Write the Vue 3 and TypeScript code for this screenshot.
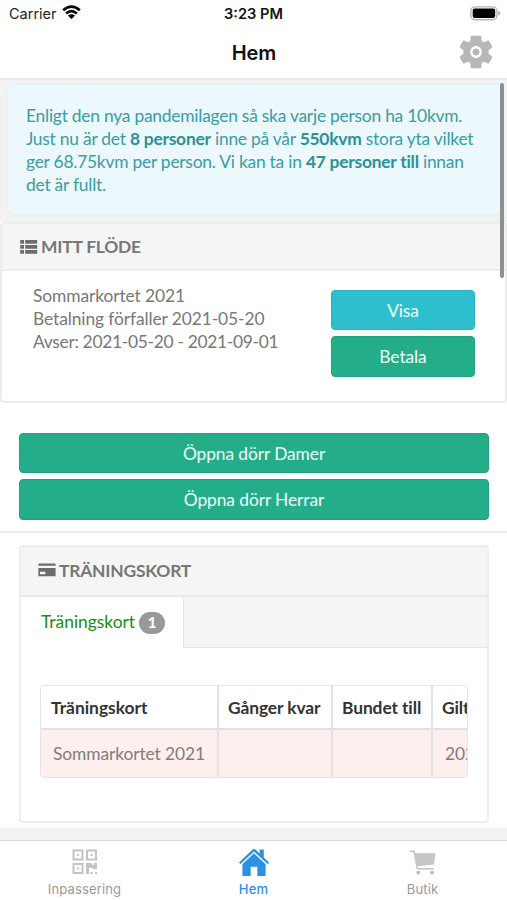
<script setup lang="ts">
interface Column {
  title: string
  value: string
}

const feedLines: string[] = [
  'Sommarkortet 2021',
  'Betalning förfaller 2021-05-20',
  'Avser: 2021-05-20 - 2021-09-01',
]
const doors: string[] = ['Öppna dörr Damer', 'Öppna dörr Herrar']
const columns: Column[] = [
  { title: 'Träningskort', value: 'Sommarkortet 2021' },
  { title: 'Gånger kvar', value: '' },
  { title: 'Bundet till', value: '' },
  { title: 'Giltigt till', value: '2021-09-01' },
]
</script>

<template>
  <div class="app">
    <header class="status">
      <div class="carrier">
        <span>Carrier</span>
        <svg class="wifi" width="19" height="15" viewBox="0 0 19 15">
          <path d="M1.2 5.2Q9.5-2 17.8 5.2M4.1 8.5Q9.5 3.900 14.900 8.500" fill="none" stroke="#050505" stroke-width="2.7" />
          <path d="M6 10.600Q9.500 7.700 13 10.600L9.500 14.200Z" fill="#050505" />
        </svg>
      </div>
      <div class="clock">3:23 PM</div>
      <div class="power">
        <svg width="31" height="15" viewBox="0 0 31 15">
          <rect x="0.9" y="0.9" width="26" height="12.800" rx="4" fill="#fff" stroke="#b4b4b4" stroke-width="1.400" />
          <rect x="2.700" y="2.500" width="22.500" height="9.600" rx="2" fill="#000" />
          <path d="M28.200 5Q30.300 5.500 30.300 7.300T28.200 9.700Z" fill="#aaa" />
        </svg>
      </div>
    </header>

    <nav class="navbar">
      <h1>Hem</h1>
      <svg class="gear" width="34" height="34" viewBox="0 0 34 34">
        <path fill="#b7b7b7" stroke="#b7b7b7" stroke-width="1.5" stroke-linejoin="round" d="M12.700 1.500h8.600l.9 5.100 2.500 1.500 4.700-1.800 3.200 5.600-3.800 3.300v3.600l3.800 3.300-3.200 5.600-4.700-1.800-2.500 1.500-.9 5.100h-8.600l-.9-5.100-2.500-1.500-4.700 1.800-3.200-5.600 3.800-3.300v-3.600l-3.800-3.300 3.200-5.600 4.700 1.800 2.500-1.500z" />
        <circle cx="17" cy="17" r="4.700" fill="#b7b7b7" stroke="#fff" stroke-width="2.400" />
      </svg>
    </nav>

    <main class="content">
      <div class="scrollbar"></div>
      <section class="notice-area">
        <div class="notice">
          Enligt den nya pandemilagen så ska varje person ha 10kvm.<br />
          Just nu är det <b>8 personer</b> inne på vår <b>550kvm</b> stora yta vilket<br />
          ger 68.75kvm per person. Vi kan ta in <b>47 personer till</b> innan<br />
          det är fullt.
        </div>
      </section>

      <section class="feed">
        <h2 class="feed-head">
          <svg class="list-icon" width="18" height="14" viewBox="0 0 18 14">
            <path fill="#6c6c6c" d="M.2 0h3.800v3.700H.2zM5.200 0h12v3.700h-12zM.2 5.100h3.800v3.600H.2zM5.200 5.100h12v3.600h-12zM.2 10.100h3.800v3.700H.2zM5.200 10.100h12v3.700h-12z" />
          </svg>
          <span>MITT FLÖDE</span>
        </h2>
        <div class="feed-body">
          <div class="feed-text">
            <div v-for="line in feedLines" :key="line">{{ line }}</div>
          </div>
          <div class="feed-actions">
            <button class="btn info">Visa</button>
            <button class="btn">Betala</button>
          </div>
        </div>
      </section>

      <section class="doors">
        <button v-for="door in doors" :key="door" class="btn">{{ door }}</button>
      </section>

      <section class="cards">
        <div class="panel">
          <h2 class="panel-head">
            <svg class="card-icon" width="18" height="14" viewBox="0 0 18 14">
              <path fill="#6c6c6c" fill-rule="evenodd" d="M1.300.4h15.400q.9 0 .9.9v1.400H.4V1.300Q.4.4 1.300.4zM.4 5h17.200v7.400q0 .9-.9.9H1.300q-.9 0-.9-.9zM2 8.800v2.500h5.400V8.800z" />
            </svg>
            <span>TRÄNINGSKORT</span>
          </h2>
          <div class="tabs">
            <div class="tab">
              <span>Träningskort</span>
              <span class="badge">1</span>
            </div>
            <div class="tab-rest"></div>
          </div>
          <div class="panel-body">
            <div class="table">
              <div v-for="col in columns" :key="col.title" class="col">
                <div class="th">{{ col.title }}</div>
                <div class="td">{{ col.value }}</div>
              </div>
            </div>
          </div>
        </div>
      </section>
    </main>

    <footer class="tabbar">
      <div class="item">
        <svg width="28" height="28" viewBox="0 0 28 28">
          <g fill="none" stroke="#c3c3c3" stroke-width="2">
            <path d="M2.500 2.500h9v9h-9zM16 2.500h9v9h-9zM2.500 16h9v9h-9z" />
          </g>
          <path fill="#c3c3c3" d="M6 6h2v2H6zM19.500 6h2v2h-2zM6 19.500h2v2H6zM15 15h5l2 2h1v-2h3v6h-4l-1.500-1.300H18V26h-3zM19.500 24h2v2h-2zM24 24h2v2h-2z" />
        </svg>
        <span>Inpassering</span>
      </div>
      <div class="item active">
        <svg width="32" height="28" viewBox="0 0 32 28">
          <path fill="#2c92df" d="M1 14.600 14.800 1.300q1.200-1.100 2.400 0L21.600 5.500V1.500h4.200v8L31 14.600l-1.500 1.500L16 3.400 2.500 16.100z" />
          <path fill="#2c92df" d="M16 5.200 27.600 16.200v11q0 1-1 1h-7.300v-9.500h-6.600v9.500H5.400q-1 0-1-1v-11z" />
        </svg>
        <span>Hem</span>
      </div>
      <div class="item">
        <svg width="28" height="28" viewBox="0 0 28 28">
          <path fill="#c6c6c6" d="M5.800 5.200H26.500L25 16.600 8.400 18.500z" />
          <path fill="none" stroke="#c3c3c3" stroke-width="1.500" stroke-linecap="round" stroke-linejoin="round" d="M1.300 3.200h3.800l3.100 17.500h16" />
          <circle cx="9.300" cy="24.600" r="1.900" fill="#bbb" />
          <circle cx="23" cy="24.600" r="1.900" fill="#bbb" />
        </svg>
        <span>Butik</span>
      </div>
    </footer>
  </div>
</template>

<style>
body {
  margin: 0;
  background: #fff;
}
</style>

<style scoped>
* {
  box-sizing: border-box;
}
.app {
  width: 507px;
  height: 900px;
  display: flex;
  flex-direction: column;
  overflow: hidden;
  background: #fff;
  color: #777;
  font: 17.4px/23.15px Lato, sans-serif;
  letter-spacing: -0.1px;
  font-variant-ligatures: none;
}
.status {
  height: 28px;
  flex: none;
  display: grid;
  grid-template-columns: 1fr auto 1fr;
  align-items: center;
  padding: 0 6px 0 9px;
  font: 14.8px/28px Inter, sans-serif;
  letter-spacing: 0;
  color: #222;
}
.carrier {
  display: flex;
  align-items: center;
  gap: 5px;
  font-size: 14.5px;
}
.wifi {
  margin-top: -3px;
}
.clock {
  margin-right: 3px;
  font-weight: 600;
  color: #111;
  font-size: 14.6px;
}
.power {
  display: flex;
  justify-content: flex-end;
  margin-top: -2px;
}
.navbar {
  height: 52px;
  flex: none;
  display: grid;
  grid-template-columns: 1fr auto 1fr;
  align-items: center;
  border-bottom: 2px solid #e8e8e8;
}
h1 {
  grid-column: 2;
  margin: 0;
  padding-left: 1px;
  font: 600 20px/48px Inter, sans-serif;
  letter-spacing: 0;
  color: #111;
}
.gear {
  justify-self: end;
  margin: -2px 14px 0 0;
}
.content {
  position: relative;
  height: 760px;
  flex: none;
  background: #f2f2f2;
}
.scrollbar {
  position: absolute;
  z-index: 2;
  top: 3px;
  right: 3px;
  width: 4px;
  height: 195px;
  border-radius: 2px;
  background: #8e9192;
}
.notice-area {
  height: 142px;
  padding: 4px 7px 7px;
}
.notice {
  height: 131px;
  padding: 19px 0 0 18px;
  border: 1px solid #dff3f5;
  border-right: 0;
  border-radius: 8px 0 0 8px;
  background: #ecf8fc;
  color: #3a9da3;
  white-space: nowrap;
  letter-spacing: -0.235px;
}
.notice b {
  color: #2a9199;
}
.feed {
  height: 181px;
  border: 2px solid #ededed;
  border-radius: 4px;
  background: #fff;
  box-shadow: 0 0 0 4px #fff;
  clip-path: inset(0 0 -6px 0);
}
h2 {
  margin: 0;
  display: flex;
  align-items: center;
  font-size: 17.4px;
  font-weight: 700;
  color: #777;
  letter-spacing: -0.2px;
}
.feed-head {
  height: 47px;
  padding-left: 18px;
  gap: 3px;
  background: #f5f5f5;
  border-bottom: 2px solid #ededed;
}
.feed-body {
  display: flex;
  justify-content: space-between;
  padding: 13px 30px 0 31px;
}
.feed-text div:last-child {
  letter-spacing: -0.3px;
}
.feed-actions {
  width: 144px;
  display: grid;
  gap: 6px;
  padding-top: 5.5px;
}
.btn {
  height: 40.5px;
  padding: 0;
  border: 1px solid #1ea37f;
  border-radius: 4px;
  background: #23ae89;
  color: #effffb;
  font: inherit;
  letter-spacing: inherit;
  line-height: 39px;
}
.btn.info {
  background: #2ebfce;
  border-color: #29b2c4;
}
.doors {
  height: 130px;
  display: grid;
  align-content: start;
  gap: 6px;
  padding: 29.5px 18px 0 19px;
  background: #fff;
  border-bottom: 2px solid #ebebeb;
}
.cards {
  height: 295px;
  padding: 12px 18px 0 19px;
  background: #fff;
}
.panel {
  height: 278px;
  border: 2px solid #ededed;
  border-radius: 4px;
  background: #fff;
}
.panel-head {
  height: 50px;
  padding-left: 17px;
  gap: 3px;
  background: #f5f5f5;
  border-bottom: 2px solid #e9e9e9;
}
.card-icon {
  margin-top: -3px;
}
.tabs {
  height: 51px;
  display: flex;
}
.tab {
  width: 163px;
  display: flex;
  align-items: center;
  gap: 4px;
  padding: 0 0 1px 20px;
  color: #148e14;
  background: #fff;
  border-right: 1px solid #e6e6e6;
  letter-spacing: 0;
}
.badge {
  width: 26px;
  height: 22px;
  margin-top: 2px;
  border-radius: 11px;
  background: #999;
  color: #fff;
  text-align: center;
  font-size: 15px;
  font-weight: 900;
  line-height: 21px;
}
.tab-rest {
  flex: 1;
  background: #f5f5f5;
  border-bottom: 1px solid #e6e6e6;
}
.panel-body {
  padding: 37px 19px 0;
}
.table {
  height: 93px;
  display: grid;
  grid-template-columns: 178px 114px 100px 120px;
  overflow: hidden;
  border: 1px solid #e5e5e5;
  border-radius: 4px;
}
.col {
  border-right: 2px solid #e3e3e3;
  white-space: nowrap;
}
.th {
  height: 44px;
  padding-left: 9px;
  border-bottom: 2px solid #e0e0e0;
  color: #333;
  font-weight: 700;
  line-height: 43px;
}
.col:first-child .th {
  padding-left: 10px;
  letter-spacing: 0;
}
.td {
  height: 48px;
  padding-left: 12px;
  background: #fdefed;
  color: #857b7b;
  line-height: 48px;
}
.tabbar {
  flex: 1;
  display: grid;
  grid-template-columns: repeat(3, 1fr);
  border-top: 1px solid #d8d8d8;
  background: #fff;
}
.item {
  display: flex;
  flex-direction: column;
  align-items: center;
  padding-top: 7px;
  color: #999;
  font: 13px/20px Inter, sans-serif;
  letter-spacing: 0.15px;
}
.item span {
  margin-top: 3px;
}
.active {
  color: #2f8cf0;
}
.active span {
  font-weight: 500;
}
</style>
